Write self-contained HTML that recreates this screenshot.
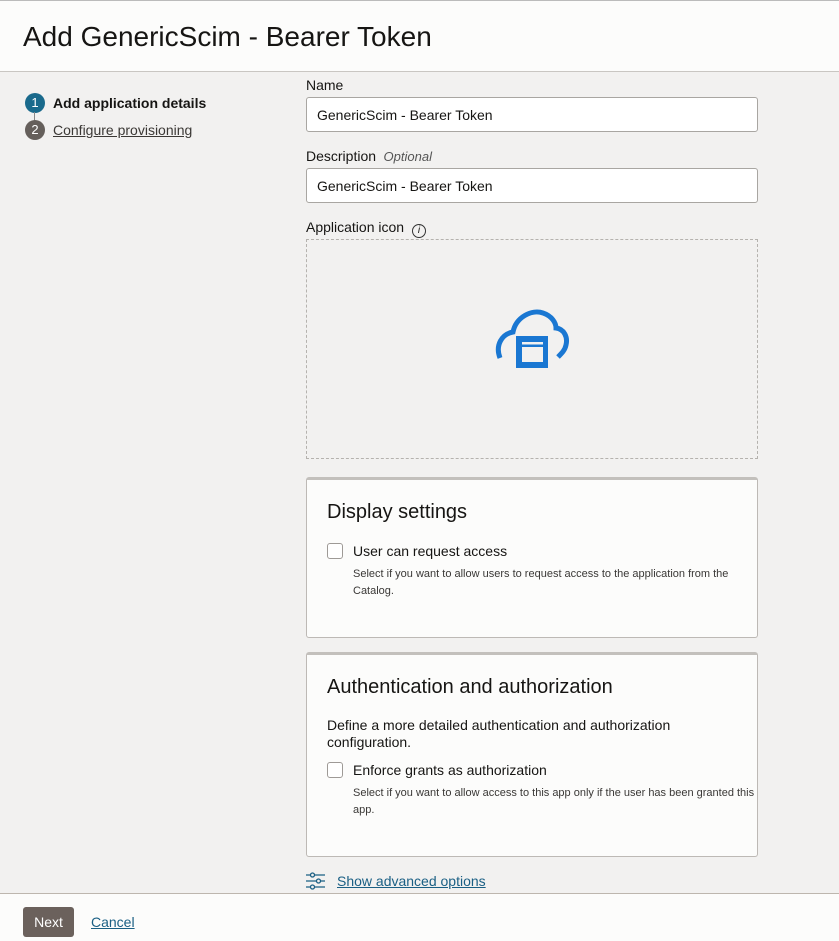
<!DOCTYPE html>
<html><head><meta charset="utf-8"><style>
*{box-sizing:border-box;margin:0;padding:0}
body{width:839px;height:941px;background:#f2f1f0;font-family:"Liberation Sans",sans-serif;color:#161513;position:relative;overflow:hidden}
.hdr{position:absolute;left:0;top:0;width:839px;height:72px;background:#fcfcfb;border-bottom:1px solid #c9c6c2;border-top:1px solid #bbb}
.hdr h1{position:absolute;left:23px;top:20px;font-size:28px;font-weight:normal}
.step{position:absolute;left:25px;font-size:14px;display:flex;align-items:center}
.num{width:20px;height:20px;border-radius:50%;color:#fff;font-size:13px;text-align:center;line-height:20px;margin-right:8px}
.line{position:absolute;left:34px;top:112px;width:1px;height:12px;background:#888}
.lbl{position:absolute;left:306px;font-size:14px}
.inp{position:absolute;left:306px;width:452px;height:35px;background:#fff;border:1px solid #a9a6a2;border-radius:3px;font-size:14px;padding:9px 10px}
.icobox{position:absolute;left:306px;top:239px;width:452px;height:220px;border:1px dashed #b5b2ae}
.card{position:absolute;left:306px;width:452px;background:#fcfcfb;border:1px solid #bdb9b5;border-top:3px solid #c3c0bc;border-radius:3px}
.card h2{position:absolute;left:20px;font-size:20px;font-weight:normal}
.cb{position:absolute;left:20px;width:16px;height:16px;border:1px solid #9e9a96;border-radius:3px;background:#fff}
.ct{position:absolute;left:46px;font-size:14px}
.help{position:absolute;left:46px;font-size:11px;line-height:17px;color:#3a3836}
.ftr{position:absolute;left:0;top:893px;width:839px;height:48px;background:#fcfcfb;border-top:1px solid #bdb6ae}
.btn{position:absolute;left:23px;top:13px;width:51px;height:30px;background:#6b615c;color:#fff;border-radius:3px;font-size:14px;text-align:center;line-height:30px}
a{color:#1a5f84;text-decoration:underline}
</style></head><body>
<div class="hdr"><h1>Add GenericScim - Bearer Token</h1></div>
<div class="step" style="top:93px"><span class="num" style="background:#1a6a8c">1</span><b>Add application details</b></div>
<div class="line"></div>
<div class="step" style="top:120px"><span class="num" style="background:#655f5b">2</span><a style="color:#3b3835">Configure provisioning</a></div>

<div class="lbl" style="top:77px">Name</div>
<div class="inp" style="top:97px">GenericScim - Bearer Token</div>
<div class="lbl" style="top:148px">Description <i style="color:#555;font-size:13px">&nbsp;Optional</i></div>
<div class="inp" style="top:168px">GenericScim - Bearer Token</div>
<div class="lbl" style="top:219px">Application icon <span style="display:inline-block;width:14px;height:14px;border:1px solid #333;border-radius:50%;font-size:10px;text-align:center;line-height:12px;font-style:italic;margin-left:4px;vertical-align:-1px">i</span></div>
<div class="icobox"></div>
<svg style="position:absolute;left:480px;top:295px" width="110" height="90" viewBox="0 0 110 90">
<path d="M20 63 C15 50 22 39 33 37 C36 22 52 14 63 18 C72 21 76 28 76 33 C84 34 88 42 86 50 C85 55 82 58 78 62" fill="none" stroke="#1a77d2" stroke-width="5"/>
<rect x="36" y="41" width="32" height="32" fill="#1a77d2"/>
<rect x="42" y="47" width="21" height="2.5" fill="#f2f1f0"/>
<rect x="42" y="52" width="21" height="15" fill="#f2f1f0"/>
</svg>

<div class="card" style="top:477px;height:161px">
<h2 style="top:21px">Display settings</h2>
<div class="cb" style="top:63px"></div>
<div class="ct" style="top:63px">User can request access</div>
<div class="help" style="top:86px">Select if you want to allow users to request access to the application from the<br>Catalog.</div>
</div>

<div class="card" style="top:652px;height:205px">
<h2 style="top:21px">Authentication and authorization</h2>
<div style="position:absolute;left:20px;top:62px;font-size:14px;line-height:17px">Define a more detailed authentication and authorization<br>configuration.</div>
<div class="cb" style="top:107px"></div>
<div class="ct" style="top:107px">Enforce grants as authorization</div>
<div class="help" style="top:130px">Select if you want to allow access to this app only if the user has been granted this<br>app.</div>
</div>

<svg style="position:absolute;left:306px;top:872px" width="20" height="18" viewBox="0 0 20 18" fill="none" stroke="#1a5f84" stroke-width="1.3">
<path d="M0 3h4M9 3h10M0 9h10M15 9h4M0 15h4M9 15h10"/>
<circle cx="6.5" cy="3" r="2"/><circle cx="12.5" cy="9" r="2"/><circle cx="6.5" cy="15" r="2"/>
</svg>
<a style="position:absolute;left:337px;top:873px;font-size:14px">Show advanced options</a>

<div class="ftr">
<div class="btn">Next</div>
<a style="position:absolute;left:91px;top:20px;font-size:14px">Cancel</a>
</div>
</body></html>
